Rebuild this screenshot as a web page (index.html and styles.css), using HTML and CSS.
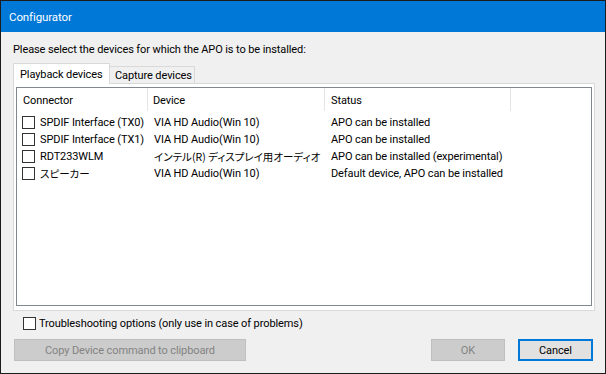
FILE: index.html
```html
<!DOCTYPE html>
<html>
<head>
<meta charset="utf-8">
<link rel="stylesheet" href="styles.css">
</head>
<body>
<div class="window">
  <div class="titlebar">Configurator</div>
  <div class="body">
    <div class="prompt">Please select the devices for which the APO is to be installed:</div>
    <div class="tabs">
      <div class="tab active">Playback devices</div>
      <div class="tab">Capture devices</div>
    </div>
    <div class="panel">
      <div class="list">
        <div class="header">
          <div class="hcol c1">Connector</div>
          <div class="hcol c2">Device</div>
          <div class="hcol c3">Status</div>
          <div class="hcol c4"></div>
        </div>
        <div class="rows">
          <div class="row">
            <div class="cell c1"><span class="cb"></span>SPDIF Interface (TX0)</div>
            <div class="cell c2">VIA HD Audio(Win 10)</div>
            <div class="cell c3">APO can be installed</div>
          </div>
          <div class="row">
            <div class="cell c1"><span class="cb"></span>SPDIF Interface (TX1)</div>
            <div class="cell c2">VIA HD Audio(Win 10)</div>
            <div class="cell c3">APO can be installed</div>
          </div>
          <div class="row">
            <div class="cell c1"><span class="cb"></span>RDT233WLM</div>
            <div class="cell c2 jp">インテル(R) ディスプレイ用オーディオ</div>
            <div class="cell c3">APO can be installed (experimental)</div>
          </div>
          <div class="row">
            <div class="cell c1"><span class="cb"></span><span class="jp">スピーカー</span></div>
            <div class="cell c2">VIA HD Audio(Win 10)</div>
            <div class="cell c3">Default device, APO can be installed</div>
          </div>
        </div>
      </div>
    </div>
    <div class="trouble"><span class="cb"></span>Troubleshooting options (only use in case of problems)</div>
    <div class="buttons">
      <button class="btn copy" disabled>Copy Device command to clipboard</button>
      <div class="spacer"></div>
      <button class="btn ok" disabled>OK</button>
      <button class="btn cancel">Cancel</button>
    </div>
  </div>
</div>
</body>
</html>
```
FILE: styles.css
```css
html, body {
  margin: 0;
  padding: 0;
}
body {
  width: 606px;
  height: 374px;
  font-family: Roboto, "Noto Sans CJK JP", sans-serif;
  font-size: 11px;
  letter-spacing: -0.1px;
  color: #000;
}
.window {
  box-sizing: border-box;
  width: 606px;
  height: 374px;
  border: 1px solid #1c1c1c;
  background: #f0f0f0;
  display: flex;
  flex-direction: column;
}
.titlebar {
  height: 31px;
  flex: none;
  background: #0078d7;
  color: #fff;
  padding-left: 8px;
  padding-top: 1px;
  box-sizing: border-box;
  display: flex;
  align-items: center;
  line-height: 15px;
  font-size: 11.5px;
}
.body {
  flex: 1;
  display: flex;
  flex-direction: column;
  padding: 10px 10px 0 12px;
}
.prompt {
  line-height: 15px;
  height: 15px;
  white-space: nowrap;
}
.tabs {
  display: flex;
  align-items: flex-end;
  height: 20px;
  margin-top: 6px;
}
.tab {
  box-sizing: border-box;
  border: 1px solid #d9d9d9;
  border-bottom: none;
  display: flex;
  align-items: center;
  white-space: nowrap;
  line-height: 15px;
}
.tab.active {
  width: 97px;
  height: 21px;
  margin-bottom: -1px;
  background: #fff;
  padding-left: 6px;
  position: relative;
  z-index: 1;
}
.tab:not(.active) {
  width: 86px;
  height: 17px;
  margin-left: -1px;
  background: #f0f0f0;
  padding-left: 5px;
}
.panel {
  box-sizing: border-box;
  height: 228px;
  border: 1px solid #d9d9d9;
  background: #fff;
  padding: 3px 2px 4px 2px;
}
.list {
  box-sizing: border-box;
  height: 219px;
  border: 1px solid #828790;
  background: #fff;
}
.header {
  display: flex;
  height: 23px;
  margin-bottom: 3px;
}
.hcol {
  box-sizing: border-box;
  height: 23px;
  border-right: 1px solid #e5e5e5;
  line-height: 15px;
  padding-top: 5px;
  white-space: nowrap;
}
.hcol.c1 { width: 131px; padding-left: 6px; }
.hcol.c2 { width: 177px; padding-left: 5px; }
.hcol.c3 { width: 186px; padding-left: 6px; }
.hcol.c4 { flex: 1; border-right: none; }
.row {
  display: flex;
  height: 17px;
  align-items: center;
  line-height: 15px;
  white-space: nowrap;
}
.cell {
  box-sizing: border-box;
  display: flex;
  align-items: center;
}
.cell.c1 { width: 131px; padding-left: 5px; }
.cell.c2 { width: 177px; padding-left: 6px; }
.cell.c3 { width: 186px; padding-left: 6px; }
.jp {
  font-family: "Noto Sans CJK JP", sans-serif;
  font-size: 10.5px;
  letter-spacing: 0;
  font-feature-settings: "palt";
}
.cb {
  box-sizing: border-box;
  width: 13px;
  height: 13px;
  border: 1px solid #333;
  background: #fff;
  flex: none;
  margin-right: 5px;
}
.trouble {
  display: flex;
  align-items: center;
  height: 13px;
  margin-top: 6px;
  margin-left: 10px;
  line-height: 15px;
  white-space: nowrap;
}
.trouble .cb {
  margin-right: 3px;
}
.buttons {
  display: flex;
  margin-top: 9px;
  margin-right: 2px;
  height: 22px;
}
.btn {
  box-sizing: border-box;
  height: 22px;
  font-family: Roboto, sans-serif;
  font-size: 11px;
  letter-spacing: -0.1px;
  line-height: 15px;
  padding: 0;
  border: 1px solid #adadad;
  background: #e1e1e1;
  color: #000;
}
.btn:disabled {
  background: #cccccc;
  border-color: #bfbfbf;
  color: #838383;
}
.copy {
  width: 232px;
  margin-left: 1px;
}
.spacer { flex: 1; }
.ok {
  width: 74px;
  margin-right: 13px;
}
.cancel {
  width: 75px;
  border: 2px solid #0078d7;
}
```
